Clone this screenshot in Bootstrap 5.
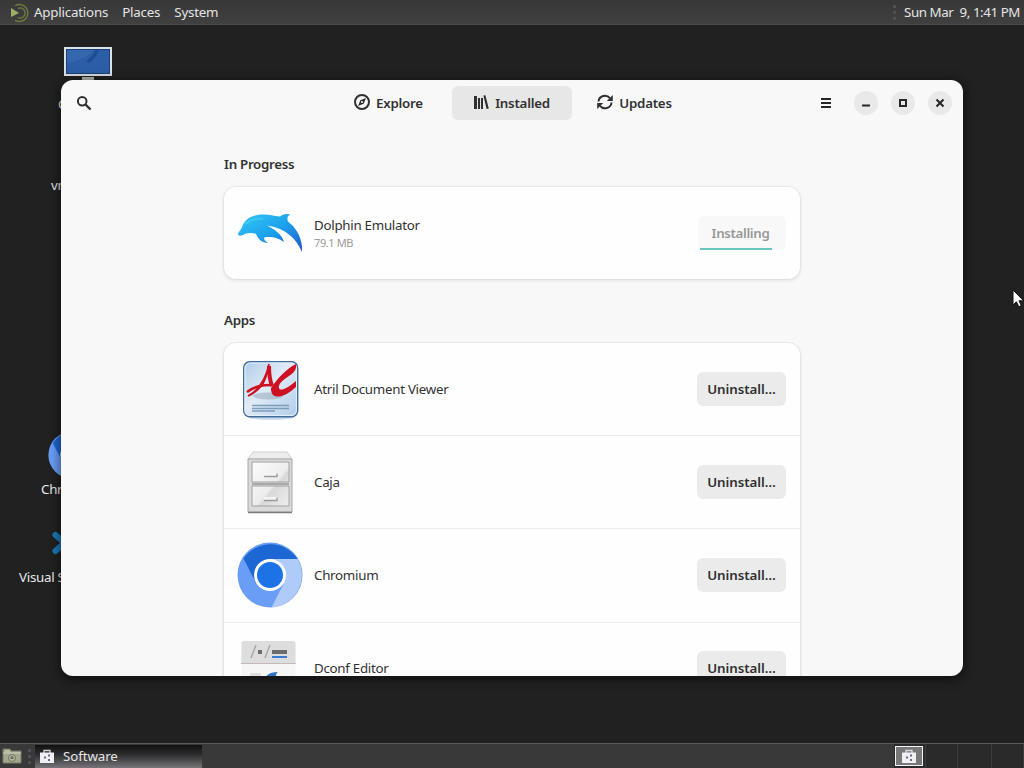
<!DOCTYPE html>
<html lang="en">

<head>
    <meta charset="UTF-8">
    <meta name="viewport" content="width=device-width, initial-scale=1.0">
    <title>Software</title>
    <link href="https://cdn.jsdelivr.net/npm/bootstrap@5.3.2/dist/css/bootstrap.min.css" rel="stylesheet">
    <style>
        body {
            font-family: "Noto Sans", "Open Sans", sans-serif;
            font-size: 13.33px;
            line-height: 18px;
            letter-spacing: -.28px;
            background: #212121;
            color: #323232;
        }

        svg { display: block; flex: none; }

        .panel-bar {
            height: 25px;
            color: #e4e4e4;
            background: linear-gradient(#383838, #404040);
        }

        .panel-top { border-bottom: 1px solid #4a4a4a; }
        .panel-top > .menu-item { margin-right: 14px; letter-spacing: -.2px; }
        .panel-top svg { margin: 0 5px 0 8px; }
        .clock { white-space: pre; letter-spacing: -.42px; }

        .panel-bottom {
            border-top: 1px solid #5a5a5a;
            background: #393939;
        }

        .grip {
            width: 3px;
            height: 15px;
            background: repeating-linear-gradient(#505050 0 3px, transparent 3px 6px);
        }

        .task {
            width: 167px;
            height: 23px;
            padding-left: 5px;
            letter-spacing: -.1px;
            background: linear-gradient(#101010, #303032 45%, #777579);
        }

        .workspace { height: 24px; background: #2a2a2a; border-right: 1px solid #3c3c3c; }

        .desk-item { color: #e8e8e8; white-space: nowrap; }

        .app-window {
            left: 61px;
            top: 55px;
            width: 902px;
            height: 596px;
            border-radius: 12px;
            background: #f8f8f8;
            box-shadow: 0 2px 10px 3px rgba(0, 0, 0, .4);
        }

        .head-bar { height: 46px; padding: 0 11px 0 15px; }
        .head-side { width: 140px; }
        .tab-set { gap: 3px; margin-right: 4px; }

        .tab-btn {
            width: 120px;
            height: 34px;
            padding-right: 1px;
            border-radius: 6px;
            font-weight: 600;
            letter-spacing: -.25px;
        }

        .tab-btn.active { background: #e7e7e7; }

        .win-btn {
            width: 24px;
            height: 24px;
            border-radius: 50%;
            background: #e9e9e9;
        }

        .page-col { width: 576px; padding-top: 29px; }

        .page-col h2 {
            font-size: 13.33px;
            line-height: 18px;
            font-weight: 600;
            letter-spacing: -.3px;
            margin: 0 0 14px;
        }

        .app-list {
            border-radius: 12px;
            background: #fefefe;
            box-shadow: 0 0 0 1px rgba(0, 0, 0, .03), 0 1px 3px 1px rgba(0, 0, 0, .08);
        }

        .app-row { height: 93px; padding: 0 14px; gap: 12px; }
        .app-row + .app-row { border-top: 1px solid #ebebeb; }

        .size-text { font-size: 11px; line-height: 15px; letter-spacing: -.4px; color: #9b9b9b; padding-top: 1px; }

        .action-btn {
            width: 89px;
            height: 34px;
            border-radius: 6px;
            background: #ebebeb;
            color: #303030;
            font-weight: 600;
            letter-spacing: -.05px;
        }

        .action-btn.busy {
            width: 88px;
            padding-right: 3px;
            letter-spacing: -.35px;
            background: #f8f8f8;
            color: #989898;
        }

        .busy-line { left: 2px; bottom: 0; width: 72px; height: 2px; background: #6cc5bb; }

        .pointer-arrow { left: 1012px; top: 264px; }
    </style>
</head>

<body>
    <div class="vh-100 d-flex flex-column overflow-hidden">
        <div class="panel-bar panel-top d-flex align-items-center">
            <svg width="21" height="22" viewBox="0 0 21 22" fill="none">
                <path d="M3 7l8 5-8 4z" fill="#9cad68" />
                <path d="M7 4.7a8.5 8.5 0 1 1 0 14.6M10 7.5a5 5 0 1 1 0 9" stroke="#6e7e40" stroke-width="1.3" />
            </svg>
            <span class="menu-item">Applications</span>
            <span class="menu-item">Places</span>
            <span class="menu-item">System</span>
            <span class="grip ms-auto me-2"></span>
            <span class="me-1 clock">Sun Mar  9, 1:41 PM</span>
        </div>

        <main class="flex-grow-1 position-relative">
            <div class="desk-item position-absolute" style="left: 58px; top: 22px">
                <svg width="60" height="48" viewBox="0 0 60 48">
                    <path d="M24 30h12v6H24z" fill="#b8b8b0" />
                    <path d="M6 0h48v29H6z" fill="#d9e2e8" />
                    <path d="M8 2h44v25H8z" fill="#1d3f75" />
                    <path d="M9 3h42v23H9z" fill="#2a5ea6" />
                    <path d="M9 16C20 14 30 10 36 3H9z" fill="#3467ae" />
                    <path d="M28 14q7-4 9-11h4q-3 8-10 13z" fill="#1e4d91" />
                </svg>
                Computer
            </div>
            <div class="desk-item position-absolute" style="left: 51px; top: 151px">vm's Home</div>
            <div class="desk-item position-absolute" style="left: 41px; top: 406px">
                <svg style="margin: 0 0 1px 7px" width="48" height="48" viewBox="0 0 66 66"><use href="#chromium" /></svg>
                Chromium
            </div>
            <div class="desk-item position-absolute" style="left: 19px; top: 505px">
                <svg style="margin: 0 0 11px 33px" width="40" height="27" viewBox="0 0 40 27">
                    <path d="M3.5 5l15 13M3.5 21L18 8" stroke="#1878b8" stroke-width="6" stroke-linecap="round" />
                </svg>
                Visual Studio Code
            </div>

            <div class="app-window position-absolute overflow-hidden d-flex flex-column">
                <header class="head-bar d-flex align-items-center justify-content-between flex-shrink-0">
                    <div class="head-side">
                        <svg width="16" height="16" viewBox="0 0 16 16" fill="none" stroke="#303030" stroke-width="2">
                            <circle cx="6.2" cy="6.2" r="4.3" />
                            <path d="M9.5 9.5l5 5" stroke-width="2.4" />
                        </svg>
                    </div>
                    <nav class="tab-set d-flex">
                        <div class="tab-btn d-flex align-items-center justify-content-center">
                            <svg class="me-1" width="18" height="18" viewBox="0 0 18 18">
                                <circle cx="8" cy="8" r="7" fill="none" stroke="#303030" stroke-width="2" />
                                <path d="M12 4L9.7 9.7 4 12l2.3-5.7z" fill="#303030" />
                                <circle cx="8" cy="8" r="1" fill="#f8f8f8" />
                            </svg>
                            Explore
                        </div>
                        <div class="tab-btn active d-flex align-items-center justify-content-center">
                            <svg class="me-1" width="18" height="18" viewBox="0 0 18 18" fill="#303030">
                                <path d="M1 2h3v13H1zM5 4h2v11H5zM8 4h2v11H8zM10.4 1.6l2-.4 3.4 13.4-2.2.4z" />
                            </svg>
                            Installed
                        </div>
                        <div class="tab-btn d-flex align-items-center justify-content-center">
                            <svg class="me-1" width="18" height="18" viewBox="0 0 18 18">
                                <path d="M1.5 7.5a6.4 6.4 0 0 1 11.4-3.3M14.5 8.5A6.4 6.4 0 0 1 3.1 11.8" fill="none" stroke="#303030" stroke-width="2" />
                                <path d="M15.8 1v6h-6zM.2 15V9h6z" fill="#303030" />
                            </svg>
                            Updates
                        </div>
                    </nav>
                    <div class="head-side d-flex align-items-center justify-content-end">
                        <svg width="12" height="12" viewBox="0 0 12 12" fill="#262626" style="margin-right: 22px">
                            <path d="M1 1h10v2H1zM1 5h10v2H1zM1 9h10v2H1z" />
                        </svg>
                        <div class="win-btn d-flex align-items-center justify-content-center">
                            <svg width="10" height="10"><path d="M1 6.5h8v2H1z" fill="#262626" /></svg>
                        </div>
                        <div class="win-btn d-flex align-items-center justify-content-center" style="margin: 0 13px">
                            <svg width="10" height="10"><path d="M2 2h6v6H2z" fill="none" stroke="#262626" stroke-width="2" /></svg>
                        </div>
                        <div class="win-btn d-flex align-items-center justify-content-center">
                            <svg width="10" height="10"><path d="M1.5 1.5l7 7M8.5 1.5l-7 7" stroke="#262626" stroke-width="2" /></svg>
                        </div>
                    </div>
                </header>

                <div class="page-col mx-auto">
                    <h2>In Progress</h2>
                    <div class="app-list">
                        <div class="app-row d-flex align-items-center" style="height: 92px">
                            <svg width="64" height="64" viewBox="0 0 64 64">
                                <defs>
                                    <linearGradient id="sea" x1="0" y1="0" x2="1" y2="1">
                                        <stop offset="0" stop-color="#35c8f5" />
                                        <stop offset=".5" stop-color="#1ba2ec" />
                                        <stop offset="1" stop-color="#2455d0" />
                                    </linearGradient>
                                </defs>
                                <path d="M0 33C1 30 3 29 4 26 7 17 15 13.5 25 13.5c7 0 11 1.5 17 2 2-2 6-3 10-2-3 2-3 4-2 7 8 6 15 17 14 30.5C58 37 47 27 29 24.5c8 4 15 9 17 16.500-6-4-10-5-15-5-3 0-5 0-5 1 0 2 2 4 4 5-6 0-10-4-12-9C13 31 7 32 5 34c-2 1-5 1-5-1z" fill="url(#sea)" />
                                <path d="M7 23q7-6 18-5" stroke="#54d5fa" stroke-width="1.5" fill="none" opacity=".6" />
                            </svg>
                            <div class="flex-grow-1">
                                <div>Dolphin Emulator</div>
                                <div class="size-text">79.1 MB</div>
                            </div>
                            <div class="action-btn busy position-relative d-flex align-items-center justify-content-center">
                                Installing
                                <span class="busy-line position-absolute"></span>
                            </div>
                        </div>
                    </div>

                    <h2 style="margin-top: 32px">Apps</h2>
                    <div class="app-list">
                        <div class="app-row d-flex align-items-center" style="height: 92px">
                            <svg width="64" height="64" viewBox="0 0 64 64">
                                <defs>
                                    <linearGradient id="paper" x1="0" y1="0" x2="1" y2="1">
                                        <stop offset="0" stop-color="#aecce8" />
                                        <stop offset=".45" stop-color="#e0ebf6" />
                                        <stop offset="1" stop-color="#b0cce9" />
                                    </linearGradient>
                                </defs>
                                <ellipse cx="33" cy="60" rx="23" ry="3" fill="#ccdceb" />
                                <rect x="5.7" y="4.7" width="54" height="55" rx="6" fill="url(#paper)" stroke="#426c9c" stroke-width="1.4" />
                                <rect x="7" y="6" width="51.4" height="52.4" rx="5" fill="none" stroke="#e8f2fb" />
                                <ellipse cx="30" cy="39" rx="15" ry="3.5" fill="#879baa" opacity=".45" />
                                <path d="M14 48.5h37M14 51.5h37M14 54h23" stroke="#7e9db9" stroke-width="1.4" />
                                <path d="M31 7C28 21 21 33 10 39c5-2 11-7 15-12 3-6 5-12 6-20z" fill="#ce1020" stroke="#ce1020" stroke-width="1.6" />
                                <path d="M31 9q0 12 3 20" fill="none" stroke="#ce1020" stroke-width="4" />
                                <path d="M9 35C17 29 24 28 34 28" fill="none" stroke="#ce1020" stroke-width="2.6" />
                                <path d="M33 31C40 21 48 12 58 7c1 5-2 9-7 12-6 4-11 8-10 12 1 4 9 0 17-7v6c-8 7-15 11-21 9-3-1-4-4-4-8z" fill="#ce1020" />
                            </svg>
                            <div class="flex-grow-1">Atril Document Viewer</div>
                            <div class="action-btn d-flex align-items-center justify-content-center">Uninstall…</div>
                        </div>
                        <div class="app-row d-flex align-items-center">
                            <svg width="64" height="64" viewBox="0 0 64 64">
                                <defs>
                                    <linearGradient id="steel" x1="0" y1="0" x2="1" y2="1">
                                        <stop offset="0" stop-color="#fcfcfc" />
                                        <stop offset=".55" stop-color="#ececec" />
                                        <stop offset=".6" stop-color="#d8d8d8" />
                                        <stop offset="1" stop-color="#efefef" />
                                    </linearGradient>
                                </defs>
                                <path d="M10 9l5-7h34l5 7z" fill="#ededed" stroke="#cfcfcf" />
                                <path d="M10 9h44v53H10z" fill="#dadada" stroke="#a6a6a6" />
                                <path d="M10 62.5h44" stroke="#7c7c7c" stroke-width="1.5" />
                                <path d="M14 12h37v20H14zM14 36h37v20H14z" fill="url(#steel)" stroke="#a2a2a2" />
                                <path d="M14 34h37" stroke="#9a9a9a" stroke-width="1.5" />
                                <path d="M26 23h13v3H26zM26 47h13v3H26z" fill="#f4f4f4" />
                                <path d="M26 26.5h13v-3M26 50.5h13v-3" fill="none" stroke="#9a9a9a" stroke-width="1.3" />
                            </svg>
                            <div class="flex-grow-1">Caja</div>
                            <div class="action-btn d-flex align-items-center justify-content-center">Uninstall…</div>
                        </div>
                        <div class="app-row d-flex align-items-center" style="height: 94px; padding-bottom: 2px">
                            <svg width="66" height="66" viewBox="0 0 66 66" style="margin: 0 -1px">
                                <g id="chromium">
                                    <circle cx="33" cy="33" r="32.5" fill="#699df6" />
                                    <path d="M33 17h27.6A32.5 32.5 0 0 1 34.5 65.5L47 41z" fill="#afcbfa" />
                                    <path d="M6.5 16.5A32.5 32.5 0 0 1 60.6 17H33L19 41z" fill="#1c67d3" />
                                    <circle cx="33" cy="33" r="16" fill="#fff" />
                                    <circle cx="33" cy="33" r="13" fill="#1d73e5" />
                                </g>
                            </svg>
                            <div class="flex-grow-1">Chromium</div>
                            <div class="action-btn d-flex align-items-center justify-content-center">Uninstall…</div>
                        </div>
                        <div class="app-row d-flex align-items-center" style="padding-bottom: 2px">
                            <svg width="64" height="64" viewBox="0 0 64 64">
                                <rect x="3.5" y="5" width="54" height="54" rx="3" fill="#f6f6f6" />
                                <path d="M3.5 27V8q0-3 3-3h48q3 0 3 3v19z" fill="#dddddd" />
                                <path d="M3 27.5h55" stroke="#c4bab7" />
                                <path d="M13 22l5-13M27 22l5-13" stroke="#a6a6a6" stroke-width="1.4" />
                                <path d="M20 14h4v4h-4zM34 14h15v4H34z" fill="#6c6c6c" />
                                <path d="M34 20h15v2H34z" fill="#3a7bd3" />
                                <path d="M27 42q3-6 13-6-3 2-2 8z" fill="#2e74c8" />
                                <path d="M12 37h11v4H12z" fill="#dedede" />
                            </svg>
                            <div class="flex-grow-1">Dconf Editor</div>
                            <div class="action-btn d-flex align-items-center justify-content-center">Uninstall…</div>
                        </div>
                    </div>
                </div>
            </div>

            <svg class="pointer-arrow position-absolute" width="12" height="20" viewBox="0 0 12 20">
                <path d="M1 1v15l3.4-3.2 2.4 5 2.5-1.2-2.3-4.8h4.7z" fill="#fff" stroke="#111" />
            </svg>
        </main>

        <div class="panel-bar panel-bottom d-flex align-items-center flex-shrink-0">
            <svg width="20" height="20" viewBox="0 0 20 20" style="margin-left: 2px">
                <path d="M1 3h7l1 2h10v12H1z" fill="#a5a78f" stroke="#777a66" />
                <path d="M1 7h18M3 5h5" stroke="#d0d2bc" />
                <circle cx="10" cy="12" r="3.5" fill="#b5b79f" stroke="#74775f" />
                <path d="M8.5 13v-2l1.5-1 1.5 1v2z" fill="#6e7159" />
            </svg>
            <span class="grip" style="margin: 0 4px 0 6px"></span>
            <div class="task d-flex align-items-center">
                <svg width="14" height="15" viewBox="0 0 14 15" style="margin-right: 9px">
                    <g id="bag">
                        <path d="M4 4V1.5h6V4" fill="none" stroke="#d8d8dc" stroke-width="1.3" />
                        <path d="M0 3.5h14V14H0z" fill="#f1eff4" />
                        <path d="M4 7.5h2v2H4zM8 5.5h2v2H8zM8 10h2v2H8z" fill="#6d6690" />
                    </g>
                </svg>
                Software
            </div>
            <div class="d-flex ms-auto" style="width: 130px">
                <div class="workspace d-flex align-items-center" style="width: 32px">
                    <div class="d-flex align-items-center justify-content-center" style="width: 28px; height: 20px; margin-left: 1px; border: 1px solid #f4f4f4; background: #77777a">
                        <svg width="14" height="15" viewBox="0 0 14 15"><use href="#bag" /></svg>
                    </div>
                </div>
                <div class="workspace" style="width: 32px"></div>
                <div class="workspace" style="width: 34px"></div>
                <div class="workspace" style="width: 32px"></div>
            </div>
        </div>
    </div>
    <script src="https://cdn.jsdelivr.net/npm/bootstrap@5.3.2/dist/js/bootstrap.bundle.min.js"></script>
</body>

</html>
